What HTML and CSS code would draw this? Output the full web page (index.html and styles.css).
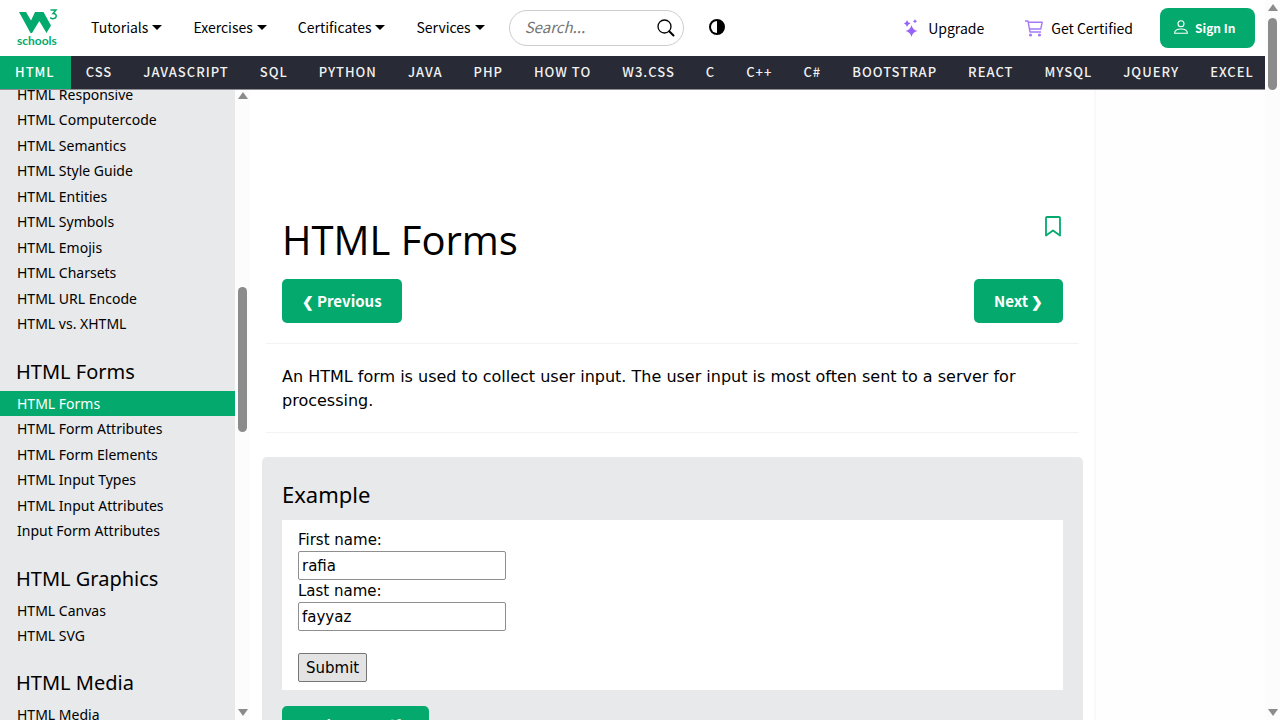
FILE: index.html
```html
<!DOCTYPE html>
<html lang="en">
<head>
<meta charset="utf-8">
<title>HTML Forms</title>
<link rel="stylesheet" href="styles.css">
</head>
<body>
<div class="page">
  <header class="topbar">
    <a class="logo" href="#" aria-label="W3Schools">
      <svg class="logo-mark" viewBox="0 0 42 26" width="42" height="26" aria-hidden="true">
        <path d="M2 3H9L14 11.500L18 3H26.500L34 16.500L29.500 24L22.300 12L15 24H13.500Z" fill="#04aa6d"/>
        <path d="M33.500 1H39L36 4.600C38.300 4.600 39.400 5.800 39.200 7.300C38.900 9.900 35.300 10.300 33.200 8.600" fill="none" stroke="#04aa6d" stroke-width="1.500"/>
      </svg>
      <span class="logo-text">schools</span>
    </a>
    <nav class="menus" aria-label="Site">
      <button class="menu" type="button">Tutorials<span class="caret"></span></button>
      <button class="menu" type="button">Exercises<span class="caret"></span></button>
      <button class="menu" type="button">Certificates<span class="caret"></span></button>
      <button class="menu" type="button">Services<span class="caret"></span></button>
    </nav>
    <form class="search">
      <input class="search-input" type="text" placeholder="Search..." aria-label="Search">
      <button class="search-button" type="button" aria-label="Search">
        <svg viewBox="0 0 18 18" width="18" height="18" aria-hidden="true"><circle cx="7.500" cy="7.500" r="6.500" fill="none" stroke="#000" stroke-width="1.300"/><path d="M12.200 12.200L16.500 16.500" stroke="#000" stroke-width="2" stroke-linecap="round"/></svg>
      </button>
    </form>
    <button class="theme" type="button" aria-label="Toggle dark mode">
      <svg viewBox="0 0 16 16" width="16" height="16" aria-hidden="true"><circle cx="8" cy="8" r="7" fill="#000" stroke="#000" stroke-width="2"/><path d="M8 2A6 6 0 0 0 8 14Z" fill="#fff"/></svg>
    </button>
    <div class="account">
      <a class="account-link upgrade" href="#">
        <svg viewBox="0 0 15 18" width="15" height="18" aria-hidden="true" fill="#9763f6"><path d="M7.500 6Q8.600 11 13.500 12Q8.600 13 7.500 18Q6.400 13 1.500 12Q6.400 11 7.500 6Z"/><path d="M3 1Q3.600 4 6.500 4.500Q3.600 5 3 8Q2.400 5 0 4.500Q2.400 4 3 1Z"/><path d="M11 0Q11.400 1.900 13.200 2.200Q11.400 2.500 11 4.400Q10.600 2.500 8.800 2.200Q10.600 1.900 11 0Z"/></svg>
        Upgrade
      </a>
      <a class="account-link certified" href="#">
        <svg viewBox="0 0 18 17" width="18" height="17" aria-hidden="true" fill="none" stroke="#a77af5" stroke-width="1.400" stroke-linejoin="round"><path d="M0 1H3L5 12H16"/><path d="M3.300 2.300H17.200L15.700 9H4.500"/><circle cx="5.500" cy="15" r="1.600" fill="#a77af5" stroke="none"/><circle cx="14.500" cy="15" r="1.600" fill="#a77af5" stroke="none"/></svg>
        Get Certified
      </a>
      <button class="signin" type="button">
        <svg viewBox="0 0 14 14" width="14" height="14" aria-hidden="true" fill="none" stroke="#fff" stroke-width="1.100"><circle cx="7" cy="3.700" r="3"/><path d="M.600 13.300C.600 10.500 3 9 7 9S13.400 10.500 13.400 13.300Z" stroke-linejoin="round"/></svg>
        Sign In
      </button>
    </div>
  </header>

  <nav class="subjects" aria-label="Subjects">
    <a class="active" href="#">HTML</a><a href="#">CSS</a><a href="#">JAVASCRIPT</a><a href="#">SQL</a><a href="#">PYTHON</a><a href="#">JAVA</a><a href="#">PHP</a><a href="#">HOW TO</a><a href="#">W3.CSS</a><a href="#">C</a><a href="#">C++</a><a href="#">C#</a><a href="#">BOOTSTRAP</a><a href="#">REACT</a><a href="#">MYSQL</a><a href="#">JQUERY</a><a href="#">EXCEL</a>
  </nav>

  <div class="body">
    <nav class="sidebar" aria-label="Chapters">
      <div class="chapters">
        <a href="#">HTML Responsive</a>
        <a href="#">HTML Computercode</a>
        <a href="#">HTML Semantics</a>
        <a href="#">HTML Style Guide</a>
        <a href="#">HTML Entities</a>
        <a href="#">HTML Symbols</a>
        <a href="#">HTML Emojis</a>
        <a href="#">HTML Charsets</a>
        <a href="#">HTML URL Encode</a>
        <a href="#">HTML vs. XHTML</a>
        <h2>HTML Forms</h2>
        <a class="active" href="#">HTML Forms</a>
        <a href="#">HTML Form Attributes</a>
        <a href="#">HTML Form Elements</a>
        <a href="#">HTML Input Types</a>
        <a href="#">HTML Input Attributes</a>
        <a href="#">Input Form Attributes</a>
        <h2>HTML Graphics</h2>
        <a href="#">HTML Canvas</a>
        <a href="#">HTML SVG</a>
        <h2>HTML Media</h2>
        <a href="#">HTML Media</a>
      </div>
    </nav>
    <div class="scrollbar" aria-hidden="true">
      <span class="arrow up"></span>
      <span class="track"><span class="space-before"></span><span class="thumb"></span><span class="space-after"></span></span>
      <span class="arrow down"></span>
    </div>
    <main class="main">
      <div class="heading">
        <h1>HTML Forms</h1>
        <button class="bookmark" type="button" aria-label="Bookmark">
          <svg viewBox="0 0 16 21" width="16" height="21" aria-hidden="true"><path d="M1 2Q1 1 2 1H14Q15 1 15 2V19.500L8 14.500L1 19.500Z" fill="none" stroke="#04aa6d" stroke-width="1.800" stroke-linejoin="round"/></svg>
        </button>
      </div>
      <div class="pager">
        <a class="button" href="#"><span class="chevron">❮</span>Previous</a>
        <a class="button" href="#">Next<span class="chevron">❯</span></a>
      </div>
      <hr>
      <p class="intro">An HTML form is used to collect user input. The user input is most often sent to a server for processing.</p>
      <hr>
      <section class="example">
        <h3>Example</h3>
        <form class="demo">
          <label for="fname">First name:</label>
          <input id="fname" type="text" value="rafia">
          <label for="lname">Last name:</label>
          <input id="lname" type="text" value="fayyaz">
          <button type="button">Submit</button>
        </form>
        <a class="button try" href="#">Try it Yourself »</a>
      </section>
    </main>
    <aside class="rail"></aside>
  </div>
</div>
<div class="scrollbar window" aria-hidden="true">
  <span class="arrow up"></span>
  <span class="track"><span class="thumb"></span></span>
  <span class="arrow down"></span>
</div>
</body>
</html>
```

FILE: styles.css
```css
* { box-sizing: border-box; }

body {
  margin: 0;
  height: 100vh;
  display: flex;
  overflow: hidden;
  background: #fff;
  color: #000;
  font-family: "DejaVu Sans", sans-serif;
  font-size: 15px;
}

a { color: inherit; text-decoration: none; }
button, input { font: inherit; color: inherit; }
svg { display: block; flex: none; }
h1, h2, h3, p { margin: 0; font-weight: 400; }

.page {
  flex: 1;
  min-width: 0;
  display: flex;
  flex-direction: column;
}

/* Top bar */
.topbar,
.subjects,
.button {
  font-family: "Noto Sans CJK SC", sans-serif;
}

.topbar {
  flex: none;
  height: 56px;
  display: flex;
  align-items: center;
  padding: 0 10px 0 17px;
  font-size: 14px;
  white-space: nowrap;
}

.logo {
  flex: none;
  width: 42px;
  padding-bottom: 2px;
  color: #04aa6d;
}

.logo-text {
  display: block;
  font-family: Lato, sans-serif;
  font-size: 12px;
  font-weight: 700;
  line-height: 11px;
}

.menus { display: flex; gap: 31px; margin-left: 32px; }

.menu {
  display: flex;
  align-items: center;
  gap: 4px;
  padding: 0 0 2px;
  border: 0;
  background: none;
  line-height: 24px;
}

.caret {
  border: 5px solid transparent;
  border-top-color: #000;
  border-bottom: 0;
}

.search {
  display: flex;
  align-items: center;
  width: 175px;
  height: 36px;
  margin-left: 24px;
  padding: 0 8px 0 15px;
  border: 1px solid #ccc;
  border-radius: 18px;
}

.search-input {
  flex: 1;
  min-width: 0;
  padding: 0 0 2px;
  border: 0;
  outline: 0;
  background: none;
  font-size: 15px;
  line-height: 24px;
}

.search-input::placeholder { color: #757575; font-style: italic; }

.search-button,
.theme,
.bookmark {
  padding: 0;
  border: 0;
  background: none;
}

.theme { margin-left: 25px; padding-bottom: 2px; }

.account {
  display: flex;
  align-items: center;
  margin-left: auto;
}

.account-link { display: flex; align-items: center; line-height: 24px; }
.upgrade { gap: 9px; margin-right: 41px; }
.certified { gap: 8px; margin-right: 27px; }

.signin {
  display: flex;
  align-items: center;
  gap: 7px;
  width: 95px;
  height: 40px;
  padding: 0 0 2px 14px;
  border: 0;
  border-radius: 8px;
  background: #04aa6d;
  color: #fff;
  font-size: 12px;
  font-weight: 700;
}

/* Subject strip */
.subjects {
  flex: none;
  display: flex;
  height: 34px;
  overflow: hidden;
  border-bottom: 1px solid #8d8d93;
  background: #282a35;
  color: #f1f1f1;
  font-size: 13px;
  font-weight: 500;
  line-height: 32px;
  letter-spacing: 1px;
  white-space: nowrap;
}

.subjects a { flex: none; padding: 0 16px 1px 15px; }
.subjects .active { background: #04aa6d; color: #fff; }

/* Chapters */
.body {
  flex: 1;
  min-height: 0;
  display: flex;
  overflow: hidden;
}

.sidebar {
  flex: none;
  width: 235px;
  overflow: hidden;
  background: #e7e9eb;
  font-family: "Noto Sans", sans-serif;
  font-size: 14px;
}

.chapters { margin-top: -8px; }

.chapters a {
  display: block;
  padding-left: 17px;
  line-height: 1.82;
}

.chapters .active { background: #04aa6d; color: #fff; }

.chapters h2 {
  padding: 19px 0 3px 16px;
  font-size: 20px;
  line-height: 32px;
}

/* Scrollbars */
.scrollbar {
  flex: none;
  display: flex;
  flex-direction: column;
  align-items: center;
  width: 15px;
  padding: 2px 0 4px;
  background: #fcfcfc;
}

.arrow { border: 5px solid transparent; }
.up { border-top: 0; border-bottom: 7px solid #8b8b8b; }
.down { border-bottom: 0; border-top: 7px solid #8b8b8b; }

.track {
  flex: 1;
  display: flex;
  flex-direction: column;
  padding: 7px 0;
}

.thumb {
  width: 9px;
  height: 145px;
  border-radius: 5px;
  background: #8b8b8b;
}

.space-before { flex: 181; }
.space-after { flex: 270; }
.window { padding-top: 4px; }
.window .thumb { height: 72px; }

/* Article */
.main {
  flex: 1;
  min-width: 0;
  padding: 124px 11px 0 12px;
  border-right: 2px solid #f9f9f9;
}

.heading {
  display: flex;
  align-items: flex-start;
  justify-content: space-between;
  padding: 0 22px 0 20px;
}

h1 {
  font-family: "Open Sans", "Noto Sans", sans-serif;
  font-size: 40px;
  line-height: 52px;
}

.bookmark { margin-top: 2px; }

.pager {
  display: flex;
  justify-content: space-between;
  margin: 13px 0 20px;
  padding: 0 20px;
}

.button {
  display: inline-flex;
  align-items: center;
  gap: 3px;
  padding: 0 20px;
  border-radius: 5px;
  background: #04aa6d;
  color: #fff;
  font-size: 15px;
  font-weight: 700;
  line-height: 44px;
}

.chevron { font-size: 14px; }

hr {
  margin: 19px 4px 21px;
  border: 0;
  border-top: 1px solid #f3f3f3;
}

.intro {
  padding: 0 20px;
  font-size: 16px;
  line-height: 24px;
}

.example {
  margin-top: 24px;
  padding: 19px 20px 16px;
  border-radius: 5px;
  background: #e7e9eb;
}

h3 {
  font-family: "Noto Sans", sans-serif;
  font-size: 22px;
  line-height: 36px;
}

.demo {
  display: flex;
  flex-direction: column;
  align-items: flex-start;
  margin: 8px 0 16px;
  padding: 9px 16px 8px;
  background: #fff;
}

.demo label { line-height: 22px; }

.demo input {
  width: 208px;
  height: 29px;
  padding: 0 3px;
  border: 1px solid #8f8f8f;
  border-radius: 2px;
}

.demo button {
  height: 29px;
  margin-top: 22px;
  padding: 0 7px;
  border: 1px solid #767676;
  border-radius: 2px;
  background: #e3e3e3;
}

.try { padding: 0 17px; line-height: 40px; }

.rail { flex: none; width: 169px; background: #fefefe; }
```
